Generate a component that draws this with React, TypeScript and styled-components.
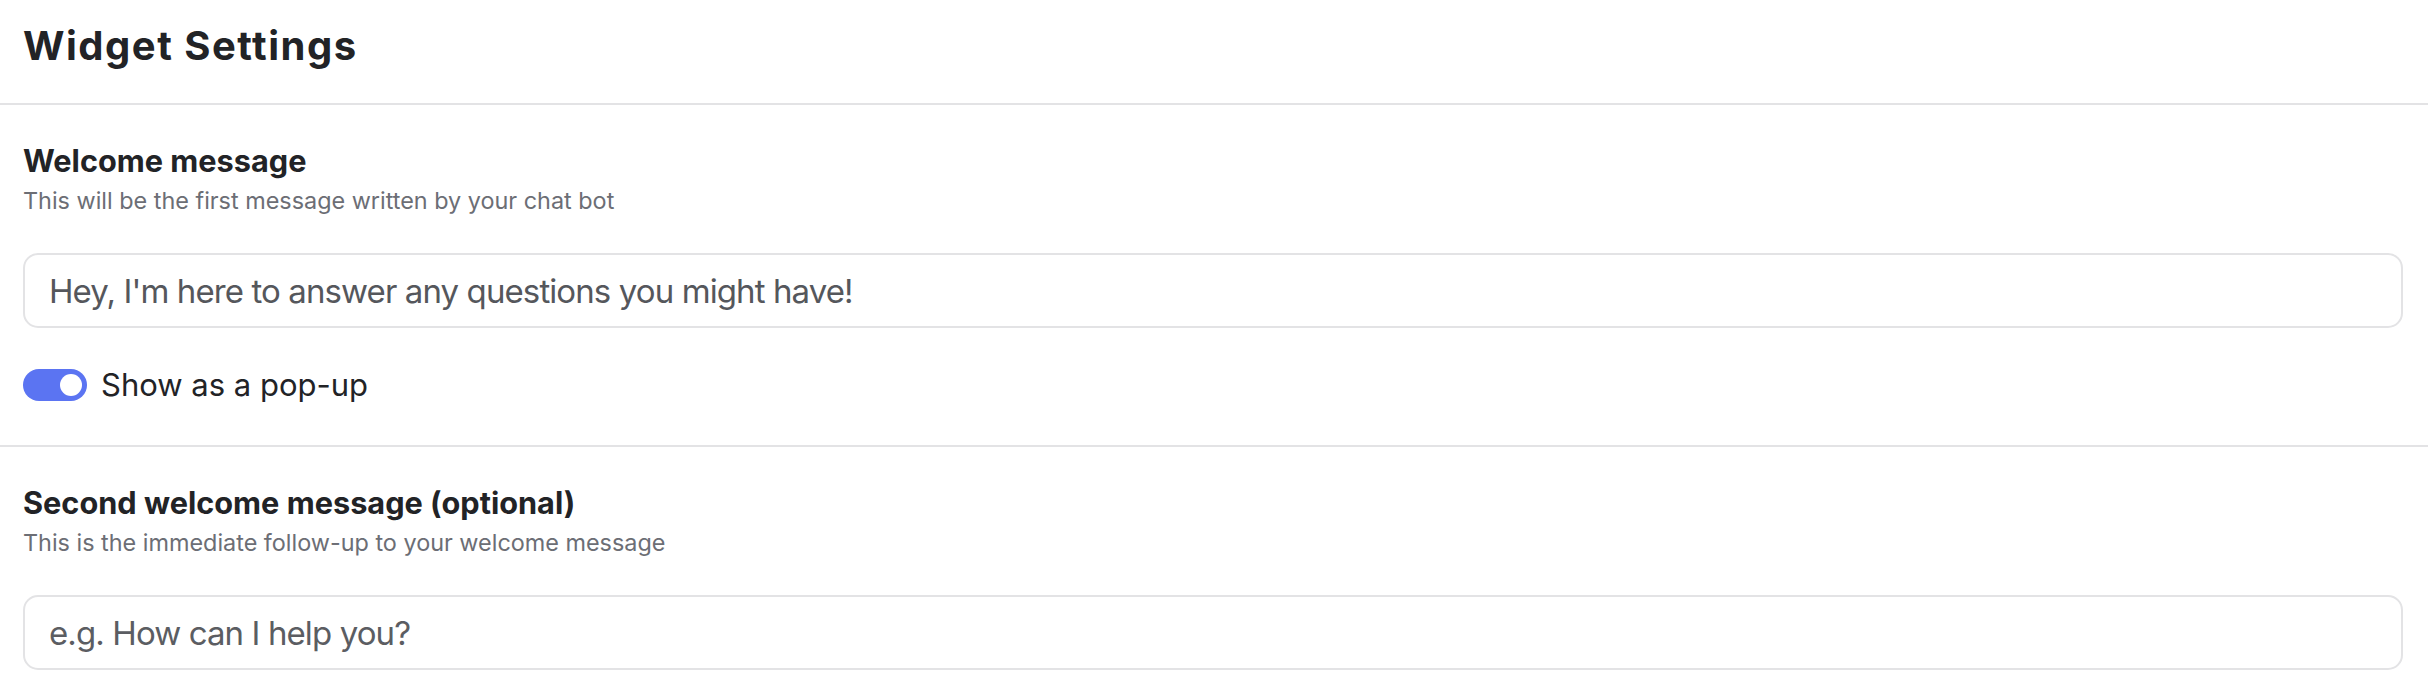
import React, { useState } from 'react'
import styled, { createGlobalStyle } from 'styled-components'

const GlobalStyle = createGlobalStyle`
	body {
		margin: 0;
		background: #ffffff;
		font-family: Inter, 'Noto Sans', sans-serif;
		color: #222326;
	}
`

const Page = styled.div`
	display: flex;
	flex-direction: column;
	width: 100%;
`

const Header = styled.header`
	padding: 22px 23px 33px 23px;
	border-bottom: 2px solid #e3e3e5;
`

const PageTitle = styled.h1`
	margin: 0;
	font-size: 40px;
	line-height: 48px;
	font-weight: 700;
	letter-spacing: 1.5px;
	color: #222326;
`

const Section = styled.section<{ last?: boolean }>`
	display: flex;
	flex-direction: column;
	padding: 38px 25px ${({ last }) => (last ? '28px' : '42px')} 23px;
	border-bottom: ${({ last }) => (last ? 'none' : '2px solid #e3e3e5')};
`

const SectionTitle = styled.h2`
	margin: 0;
	font-size: 30.7px;
	line-height: 36px;
	font-weight: 700;
	color: #222326;
`

const SectionHint = styled.p`
	margin: 6px 0 0 0;
	font-size: 23.4px;
	line-height: 32px;
	color: #6c6e75;
`

const TextInput = styled.input`
	box-sizing: border-box;
	width: 100%;
	height: 75px;
	margin-top: 36px;
	padding: 0 24px;
	border: 2px solid #e3e3e5;
	border-radius: 15px;
	background: #ffffff;
	font-family: inherit;
	font-size: 33px;
	letter-spacing: -0.9px;
	color: #55575c;
	outline: none;

	&::placeholder {
		color: #5b5d62;
		opacity: 1;
	}
`

const ToggleRow = styled.label`
	display: flex;
	flex-direction: row;
	align-items: center;
	gap: 14px;
	margin-top: 39px;
	cursor: pointer;
`

const Track = styled.span<{ on: boolean }>`
	position: relative;
	display: inline-block;
	width: 64px;
	height: 32px;
	border-radius: 16px;
	background: ${({ on }) => (on ? '#5b74f2' : '#d4d5d9')};
	flex-shrink: 0;
`

const Knob = styled.span<{ on: boolean }>`
	position: absolute;
	top: 5px;
	left: ${({ on }) => (on ? '37px' : '5px')};
	width: 22px;
	height: 22px;
	border-radius: 50%;
	background: #ffffff;
`

const ToggleLabel = styled.span`
	font-size: 31px;
	line-height: 36px;
	color: #222326;
`

export default function App() {
	const [popup, setPopup] = useState(true)
	const [welcome, setWelcome] = useState("Hey, I'm here to answer any questions you might have!")
	const [second, setSecond] = useState('')

	return (
		<Page>
			<GlobalStyle />
			<Header>
				<PageTitle>Widget Settings</PageTitle>
			</Header>
			<Section>
				<SectionTitle>Welcome message</SectionTitle>
				<SectionHint>This will be the first message written by your chat bot</SectionHint>
				<TextInput value={welcome} onChange={(e) => setWelcome(e.target.value)} />
				<ToggleRow onClick={() => setPopup(!popup)}>
					<Track on={popup}>
						<Knob on={popup} />
					</Track>
					<ToggleLabel>Show as a pop-up</ToggleLabel>
				</ToggleRow>
			</Section>
			<Section last>
				<SectionTitle>Second welcome message (optional)</SectionTitle>
				<SectionHint>This is the immediate follow-up to your welcome message</SectionHint>
				<TextInput placeholder="e.g. How can I help you?" value={second} onChange={(e) => setSecond(e.target.value)} />
			</Section>
		</Page>
	)
}
